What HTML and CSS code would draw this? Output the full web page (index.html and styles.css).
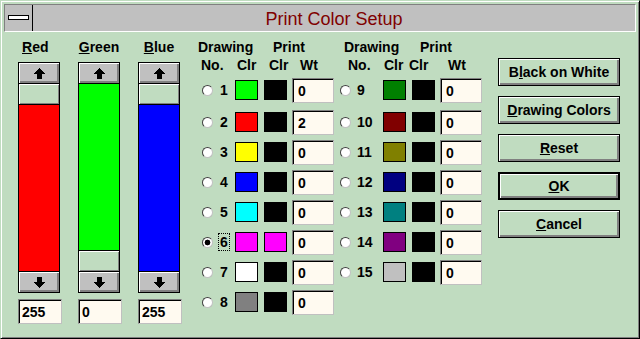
FILE: index.html
```html
<!DOCTYPE html>
<html lang="en">
<head>
    <meta charset="UTF-8">
    <title>Print Color Setup</title>
    <link rel="stylesheet" href="styles.css">
</head>
<body>
    <div class="window">
        <div class="titlebar">
            <div class="sysmenu"><span class="sysbar"></span></div>
            <div class="title">Print Color Setup</div>
        </div>

        <div class="content">
            <!-- RGB sliders -->
            <div class="sliders">
                <div class="slider-col">
                    <div class="slider-label label-red"><u>R</u>ed</div>
                    <div class="scroll">
                        <div class="arrow-btn up"><svg width="13" height="11" viewBox="0 0 13 11"><polygon points="6.5,0 13,6 9,6 9,11 4,11 4,6 0,6"/></svg></div>
                        <div class="thumb top"></div>
                        <div class="fill c-red"></div>
                        <div class="arrow-btn down"><svg width="13" height="11" viewBox="0 0 13 11"><polygon points="6.5,11 13,5 9,5 9,0 4,0 4,5 0,5"/></svg></div>
                    </div>
                    <input class="value" type="text" value="255">
                </div>
                <div class="slider-col">
                    <div class="slider-label"><u>G</u>reen</div>
                    <div class="scroll">
                        <div class="arrow-btn up"><svg width="13" height="11" viewBox="0 0 13 11"><polygon points="6.5,0 13,6 9,6 9,11 4,11 4,6 0,6"/></svg></div>
                        <div class="fill c-lime"></div>
                        <div class="thumb bottom"></div>
                        <div class="arrow-btn down"><svg width="13" height="11" viewBox="0 0 13 11"><polygon points="6.5,11 13,5 9,5 9,0 4,0 4,5 0,5"/></svg></div>
                    </div>
                    <input class="value" type="text" value="0">
                </div>
                <div class="slider-col">
                    <div class="slider-label"><u>B</u>lue</div>
                    <div class="scroll">
                        <div class="arrow-btn up"><svg width="13" height="11" viewBox="0 0 13 11"><polygon points="6.5,0 13,6 9,6 9,11 4,11 4,6 0,6"/></svg></div>
                        <div class="thumb top"></div>
                        <div class="fill c-blue"></div>
                        <div class="arrow-btn down"><svg width="13" height="11" viewBox="0 0 13 11"><polygon points="6.5,11 13,5 9,5 9,0 4,0 4,5 0,5"/></svg></div>
                    </div>
                    <input class="value" type="text" value="255">
                </div>
            </div>

            <!-- drawing / print colour table -->
            <div class="colors">
                <div class="head head-1">
                    <span class="h-draw">Drawing</span>
                    <span class="h-print">Print</span>
                    <span class="h-draw2">Drawing</span>
                    <span>Print</span>
                </div>
                <div class="head head-2">
                    <span class="h-no">No.</span>
                    <span class="h-clr">Clr</span>
                    <span class="h-pclr">Clr</span>
                    <span class="h-wt">Wt</span>
                    <span class="h-no">No.</span>
                    <span class="h-clr2">Clr</span>
                    <span class="h-pclr2">Clr</span>
                    <span>Wt</span>
                </div>

                <div class="rows">
                    <div class="row">
                        <div class="group">
                            <div class="pick"><span class="radio"></span><span class="num">1</span></div>
                            <span class="swatch c-lime"></span><span class="swatch print c-black"></span>
                            <input class="wt" type="text" value="0">
                        </div>
                        <div class="group">
                            <div class="pick wide"><span class="radio"></span><span class="num">9</span></div>
                            <span class="swatch c-green"></span><span class="swatch print c-black"></span>
                            <input class="wt" type="text" value="0">
                        </div>
                    </div>
                    <div class="row">
                        <div class="group">
                            <div class="pick"><span class="radio"></span><span class="num">2</span></div>
                            <span class="swatch c-red"></span><span class="swatch print c-black"></span>
                            <input class="wt" type="text" value="2">
                        </div>
                        <div class="group">
                            <div class="pick wide"><span class="radio"></span><span class="num">10</span></div>
                            <span class="swatch c-maroon"></span><span class="swatch print c-black"></span>
                            <input class="wt" type="text" value="0">
                        </div>
                    </div>
                    <div class="row">
                        <div class="group">
                            <div class="pick"><span class="radio"></span><span class="num">3</span></div>
                            <span class="swatch c-yellow"></span><span class="swatch print c-black"></span>
                            <input class="wt" type="text" value="0">
                        </div>
                        <div class="group">
                            <div class="pick wide"><span class="radio"></span><span class="num">11</span></div>
                            <span class="swatch c-olive"></span><span class="swatch print c-black"></span>
                            <input class="wt" type="text" value="0">
                        </div>
                    </div>
                    <div class="row">
                        <div class="group">
                            <div class="pick"><span class="radio"></span><span class="num">4</span></div>
                            <span class="swatch c-blue"></span><span class="swatch print c-black"></span>
                            <input class="wt" type="text" value="0">
                        </div>
                        <div class="group">
                            <div class="pick wide"><span class="radio"></span><span class="num">12</span></div>
                            <span class="swatch c-navy"></span><span class="swatch print c-black"></span>
                            <input class="wt" type="text" value="0">
                        </div>
                    </div>
                    <div class="row">
                        <div class="group">
                            <div class="pick"><span class="radio"></span><span class="num">5</span></div>
                            <span class="swatch c-cyan"></span><span class="swatch print c-black"></span>
                            <input class="wt" type="text" value="0">
                        </div>
                        <div class="group">
                            <div class="pick wide"><span class="radio"></span><span class="num">13</span></div>
                            <span class="swatch c-teal"></span><span class="swatch print c-black"></span>
                            <input class="wt" type="text" value="0">
                        </div>
                    </div>
                    <div class="row">
                        <div class="group">
                            <div class="pick"><span class="radio on"></span><span class="num focus">6</span></div>
                            <span class="swatch c-magenta"></span><span class="swatch print c-magenta"></span>
                            <input class="wt" type="text" value="0">
                        </div>
                        <div class="group">
                            <div class="pick wide"><span class="radio"></span><span class="num">14</span></div>
                            <span class="swatch c-purple"></span><span class="swatch print c-black"></span>
                            <input class="wt" type="text" value="0">
                        </div>
                    </div>
                    <div class="row">
                        <div class="group">
                            <div class="pick"><span class="radio"></span><span class="num">7</span></div>
                            <span class="swatch c-white"></span><span class="swatch print c-black"></span>
                            <input class="wt" type="text" value="0">
                        </div>
                        <div class="group">
                            <div class="pick wide"><span class="radio"></span><span class="num">15</span></div>
                            <span class="swatch c-silver"></span><span class="swatch print c-black"></span>
                            <input class="wt" type="text" value="0">
                        </div>
                    </div>
                    <div class="row">
                        <div class="group">
                            <div class="pick"><span class="radio"></span><span class="num">8</span></div>
                            <span class="swatch c-gray"></span><span class="swatch print c-black"></span>
                            <input class="wt" type="text" value="0">
                        </div>
                    </div>
                </div>
            </div>

            <!-- command buttons -->
            <div class="buttons">
                <button class="btn">B<u>l</u>ack on White</button>
                <button class="btn"><u>D</u>rawing Colors</button>
                <button class="btn"><u>R</u>eset</button>
                <button class="btn default"><u>O</u>K</button>
                <button class="btn"><u>C</u>ancel</button>
            </div>
        </div>
    </div>
</body>
</html>
```

FILE: styles.css
```css
/* Windows 3.1 style dialog */
body {
    margin: 0;
    font-family: "Liberation Sans", Arial, sans-serif;
    font-size: 14px;
    font-weight: bold;
    color: #000;
}

.window {
    box-sizing: border-box;
    width: 640px;
    height: 339px;
    padding: 3px 3px 0 3px;
    background-color: #c0dcc0;
    border: 1px solid #000;
    border-top-color: #c0dcc0;
    border-left-color: #c0dcc0;
    box-shadow: inset 1px 1px #fff, inset -1px -1px #808080;
}

.titlebar {
    display: flex;
    box-sizing: border-box;
    height: 28px;
    background-color: #c0c0c0;
    border: 1px solid;
    border-color: #808080 #fff #fff #808080;
}

.sysmenu {
    width: 27px;
    border-right: 1px solid #000;
    display: flex;
    align-items: center;
    justify-content: center;
}

.sysbar {
    box-sizing: border-box;
    width: 21px;
    height: 5px;
    margin-bottom: 1px;
    border: 1px solid #000;
    background-color: #fff;
}

.title {
    flex: 1;
    text-align: center;
    color: #800000;
    font-size: 18px;
    font-weight: normal;
    line-height: 26px;
    padding-top: 1px;
}

.content {
    display: flex;
    padding: 6px 0 0 14px;
}

/* sliders */
.sliders {
    display: flex;
    gap: 16px;
}

.slider-col {
    width: 44px;
}

.slider-label {
    width: 42px;
    text-align: center;
    line-height: 18px;
}

.slider-label.label-red {
    text-align: left;
    padding-left: 4px;
    box-sizing: border-box;
}

.scroll {
    box-sizing: border-box;
    width: 42px;
    height: 231px;
    margin-top: 6px;
    border: 1px solid #000;
    display: flex;
    flex-direction: column;
}

.arrow-btn {
    flex: none;
    height: 20px;
    background-color: #c0c0c0;
    box-shadow: inset 1px 1px #fff, inset -2px -2px #808080;
    display: flex;
    align-items: center;
    justify-content: center;
}

.arrow-btn svg {
    fill: #000;
    shape-rendering: crispEdges;
}

.arrow-btn.up {
    border-bottom: 1px solid #000;
}

.arrow-btn.down {
    border-top: 1px solid #000;
}

.thumb {
    flex: none;
    height: 20px;
    background-color: #c0dcc0;
    box-shadow: inset 1px 1px #fff, inset -1px -1px #808080;
}

.thumb.top {
    border-bottom: 1px solid #000;
}

.thumb.bottom {
    border-top: 1px solid #000;
}

.fill {
    flex: 1;
}

input {
    box-sizing: border-box;
    display: block;
    height: 25px;
    margin: 0;
    border: 1px solid;
    border-color: #808080 #c0c0c0 #c0c0c0 #808080;
    box-shadow: inset 1px 1px #000;
    background-color: #fffaf0;
    font-family: "Liberation Sans", Arial, sans-serif;
    font-size: 14px;
    font-weight: bold;
    color: #000;
    outline: none;
}

.value {
    width: 44px;
    margin-top: 6px;
    padding: 1px 0 0 3px;
}

/* colour table */
.colors {
    margin-left: 16px;
}

.head {
    display: flex;
    line-height: 18px;
}

.h-draw { width: 75px; }
.h-print { width: 71px; }
.h-draw2 { width: 76px; }

.head-2 {
    padding-left: 3px;
}

.h-no { width: 36px; }
.h-clr { width: 32px; }
.h-pclr { width: 31px; }
.h-wt { width: 48px; }
.h-clr2 { width: 25px; }
.h-pclr2 { width: 39px; }

.rows {
    margin-top: 1px;
    padding-left: 4px;
}

.row {
    display: flex;
    align-items: center;
    height: 30px;
}

.row:first-child {
    margin-bottom: 2px;
}

.group {
    display: flex;
    align-items: center;
}

.group + .group {
    margin-left: 6px;
}

.pick {
    width: 33px;
    display: flex;
    align-items: center;
}

.pick.wide {
    width: 43px;
}

.radio {
    box-sizing: border-box;
    width: 11px;
    height: 11px;
    border-radius: 50%;
    border: 1px solid;
    border-color: #404040 #c0c0c0 #c0c0c0 #404040;
    background-color: #fff;
}

.radio.on {
    background: radial-gradient(circle, #000 2.6px, #fff 3.2px);
}

.num {
    margin-left: 7px;
    line-height: 16px;
}

.pick.wide .num {
    margin-left: 6px;
}

.num.focus {
    outline: 1px dotted #000;
    outline-offset: 0;
    margin-left: 6px;
    padding: 0 1px;
}

.swatch {
    box-sizing: border-box;
    width: 23px;
    height: 20px;
    border: 1px solid #000;
}

.swatch.print {
    margin-left: 6px;
}

.wt {
    width: 42px;
    margin-left: 5px;
    padding: 1px 0 0 5px;
}

.c-black { background-color: #000; }
.c-lime { background-color: #00ff00; }
.c-red { background-color: #ff0000; }
.c-yellow { background-color: #ffff00; }
.c-blue { background-color: #0000ff; }
.c-cyan { background-color: #00ffff; }
.c-magenta { background-color: #ff00ff; }
.c-white { background-color: #fff; }
.c-gray { background-color: #808080; }
.c-green { background-color: #008000; }
.c-maroon { background-color: #800000; }
.c-olive { background-color: #808000; }
.c-navy { background-color: #000080; }
.c-teal { background-color: #008080; }
.c-purple { background-color: #800080; }
.c-silver { background-color: #c0c0c0; }

/* buttons */
.buttons {
    margin-left: 16px;
    margin-top: 20px;
    display: flex;
    flex-direction: column;
    gap: 10px;
}

.btn {
    box-sizing: border-box;
    width: 122px;
    height: 28px;
    padding: 0;
    border: 1px solid #000;
    background-color: #c0dcc0;
    box-shadow: inset 1px 1px #fff, inset -2px -2px #808080;
    font-family: "Liberation Sans", Arial, sans-serif;
    font-size: 14px;
    font-weight: bold;
    color: #000;
}

.btn.default {
    border-width: 2px;
}
```
